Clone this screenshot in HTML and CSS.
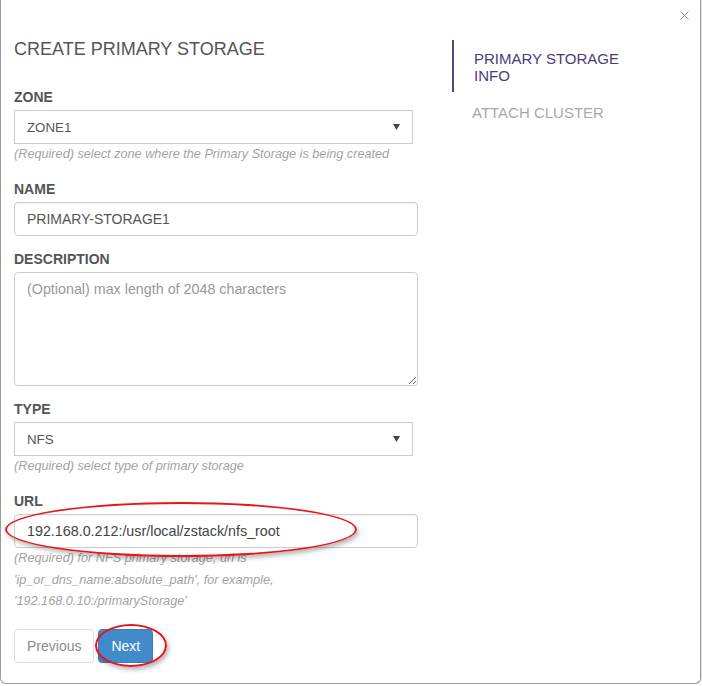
FILE: index.html
```html
<!DOCTYPE html>
<html>
<head>
<meta charset="utf-8">
<link rel="stylesheet" href="styles.css">
</head>
<body>
<div class="modal">
  <button class="close" aria-label="close">
    <svg width="9" height="9" viewBox="0 0 9 9"><path d="M0.5 0.5 L8.5 8.5 M8.5 0.5 L0.5 8.5" stroke="#8a8a8a" stroke-width="1" fill="none"/></svg>
  </button>
  <div class="layout">
    <div class="form">
      <h4 class="title">CREATE PRIMARY STORAGE</h4>

      <div class="group">
        <label class="label">ZONE</label>
        <div class="select"><span>ZONE1</span><svg width="7" height="6" viewBox="0 0 7 6"><path d="M0 0 H7 L3.5 6 Z" fill="#444"/></svg></div>
        <div class="help">(Required) select zone where the Primary Storage is being created</div>
      </div>

      <div class="group">
        <label class="label">NAME</label>
        <input class="input" type="text" value="PRIMARY-STORAGE1">
      </div>

      <div class="group">
        <label class="label">DESCRIPTION</label>
        <textarea class="textarea" placeholder="(Optional) max length of 2048 characters"></textarea>
      </div>

      <div class="group">
        <label class="label">TYPE</label>
        <div class="select"><span>NFS</span><svg width="7" height="6" viewBox="0 0 7 6"><path d="M0 0 H7 L3.5 6 Z" fill="#444"/></svg></div>
        <div class="help">(Required) select type of primary storage</div>
      </div>

      <div class="group">
        <label class="label">URL</label>
        <input class="input url" type="text" value="192.168.0.212:/usr/local/zstack/nfs_root">
        <div class="help multi">(Required) for NFS primary storage, url is<br>'ip_or_dns_name:absolute_path', for example,<br>'192.168.0.10:/primaryStorage'</div>
      </div>

      <div class="actions">
        <button class="btn btn-default">Previous</button>
        <button class="btn btn-primary">Next</button>
      </div>
    </div>

    <nav class="steps">
      <div class="step active">PRIMARY STORAGE<br>INFO</div>
      <div class="step">ATTACH CLUSTER</div>
    </nav>
  </div>

  <div class="mark mark-url"></div>
  <div class="mark mark-next"></div>
</div>
</body>
</html>
```

FILE: styles.css
```css
html, body {
  margin: 0;
  padding: 0;
  background: #fff;
}

body {
  font-family: "Liberation Sans", Arial, sans-serif;
  color: #555;
}

.modal {
  position: relative;
  box-sizing: border-box;
  width: 701px;
  height: 684px;
  background: #fff;
  border: 1px solid #9a9a9a;
  border-top: none;
  border-radius: 0 0 6px 6px;
  box-shadow: 1px 0 1px rgba(0, 0, 0, 0.12);
  overflow: hidden;
}

.close {
  position: absolute;
  top: 11px;
  right: 11px;
  border: none;
  background: transparent;
  padding: 0;
  width: 9px;
  height: 9px;
  display: flex;
}

.layout {
  display: flex;
  align-items: flex-start;
}

.form {
  width: 404px;
  padding-left: 13px;
  padding-top: 39px;
}

.title {
  margin: 0 0 28px;
  font-size: 18px;
  line-height: 20px;
  font-weight: normal;
  color: #555;
}

.group {
  margin-bottom: 13px;
}

.label {
  display: block;
  font-size: 14px;
  line-height: 20px;
  font-weight: bold;
  color: #555;
  margin-bottom: 3px;
}

.select {
  box-sizing: border-box;
  width: 399px;
  height: 34px;
  border: 1px solid #ccc;
  background: #fff;
  padding: 0 12px 0 12px;
  display: flex;
  align-items: center;
  justify-content: space-between;
  font-size: 13.3px;
  color: #555;
}

.input {
  box-sizing: border-box;
  display: block;
  width: 404px;
  height: 34px;
  border: 1px solid #ccc;
  border-radius: 4px;
  padding: 6px 12px;
  font-family: "Liberation Sans", Arial, sans-serif;
  font-size: 14px;
  color: #555;
  background: #fff;
  box-shadow: inset 0 1px 1px rgba(0, 0, 0, 0.04);
  outline: none;
}

.input.url {
  font-size: 14.3px;
  color: #444;
}

.textarea {
  box-sizing: border-box;
  display: block;
  width: 404px;
  height: 114px;
  border: 1px solid #ccc;
  border-radius: 4px;
  padding: 6px 12px;
  font-family: "Liberation Sans", Arial, sans-serif;
  font-size: 14.3px;
  line-height: 20px;
  color: #555;
  margin: 0;
  outline: none;
}

.textarea::placeholder {
  color: #999;
}

.help {
  font-size: 12.7px;
  line-height: 21px;
  font-style: italic;
  color: #a3a3a3;
  padding-bottom: 1px;
}

.help.multi {
  line-height: 21.5px;
}

.actions {
  display: flex;
  gap: 4px;
  padding-top: 2px;
}

.btn {
  box-sizing: border-box;
  height: 34px;
  padding: 6px 12px;
  font-family: "Liberation Sans", Arial, sans-serif;
  font-size: 14px;
  line-height: 20px;
  border-radius: 4px;
  border: 1px solid transparent;
}

.btn-default {
  background: #fff;
  border-color: #ddd;
  color: #8c8c8c;
}

.btn-primary {
  background: #428bca;
  border-color: #357ebd;
  color: #fff;
}

.steps {
  margin-left: 34px;
  margin-top: 40px;
}

.step {
  padding: 12px 0 8px 20px;
  font-size: 15px;
  line-height: 17px;
  color: #a9a9a9;
}

.step.active {
  border-left: 2px solid #5a4488;
  color: #4b3b7b;
  padding-top: 10px;
  padding-bottom: 8px;
}

.mark {
  position: absolute;
  box-sizing: border-box;
  border: 2px solid #e8161b;
  border-radius: 50%;
  box-shadow: 2px 3px 4px rgba(0, 0, 0, 0.28);
}

.mark-url {
  left: 4px;
  top: 502px;
  width: 352px;
  height: 55px;
}

.mark-next {
  left: 94px;
  top: 624px;
  width: 72px;
  height: 43px;
}
```
